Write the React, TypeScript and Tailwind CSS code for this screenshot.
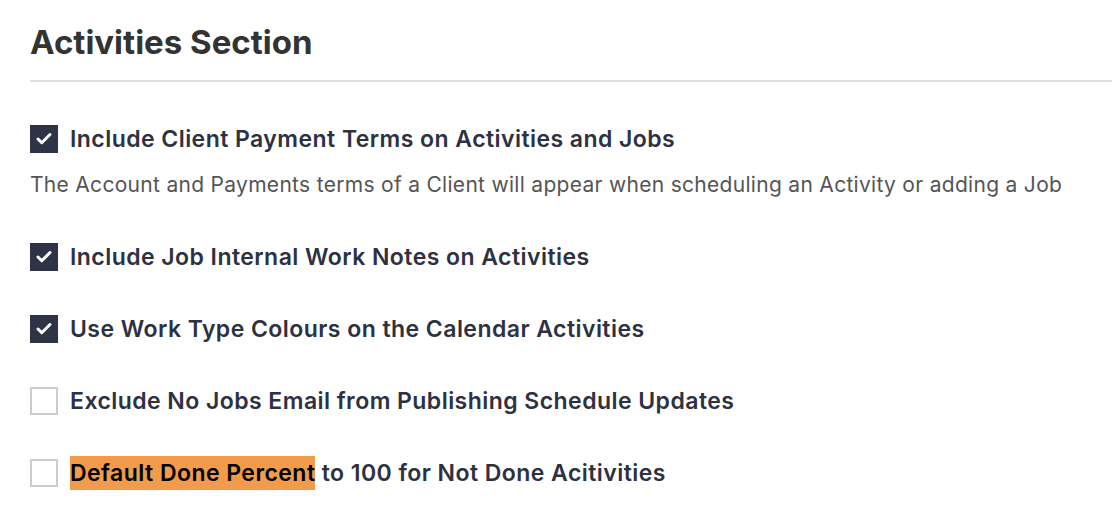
import { Check } from "lucide-react";

type Option = {
  label: string;
  highlight?: string;
  checked: boolean;
  description?: string;
};

const options: Option[] = [
  {
    label: "Include Client Payment Terms on Activities and Jobs",
    checked: true,
    description:
      "The Account and Payments terms of a Client will appear when scheduling an Activity or adding a Job",
  },
  { label: "Include Job Internal Work Notes on Activities", checked: true },
  { label: "Use Work Type Colours on the Calendar Activities", checked: true },
  { label: "Exclude No Jobs Email from Publishing Schedule Updates", checked: false },
  { highlight: "Default Done Percent", label: " to 100 for Not Done Acitivities", checked: false },
];

function Box({ checked }: { checked: boolean }) {
  if (checked) {
    return (
      <span className="flex h-7 w-7 shrink-0 items-center justify-center bg-[#2e3345]">
        <Check size={18} strokeWidth={4} className="text-white" />
      </span>
    );
  }
  return <span className="h-7 w-7 shrink-0 border-2 border-[#cccccc] bg-white" />;
}

export default function App() {
  return (
    <div className="h-[520px] w-[1112px] overflow-hidden bg-white pl-[30px] font-['Inter',sans-serif]">
      <h1 className="pt-[22px] pb-[18px] text-[33px] font-bold leading-[40px] tracking-[0px] text-[#333333]">
        Activities Section
      </h1>
      <div className="h-[2px] bg-[#e0e0e0]" />
      <div className="flex flex-col gap-[44px] pt-[43px]">
        {options.map((o, i) => (
          <div key={i}>
            <label className="flex items-center gap-3">
              <Box checked={o.checked} />
              <span className="text-[23px] font-semibold leading-[28px] tracking-[0.45px] text-[#2d3142]">
                {o.highlight && (
                  <span className="bg-[#f29b4b] py-[3px] text-black">{o.highlight}</span>
                )}
                {o.label}
              </span>
            </label>
            {o.description && (
              <p className="pt-[18px] text-[21px] leading-[28px] tracking-[0.3px] text-[#555555]">
                {o.description}
              </p>
            )}
          </div>
        ))}
      </div>
    </div>
  );
}
